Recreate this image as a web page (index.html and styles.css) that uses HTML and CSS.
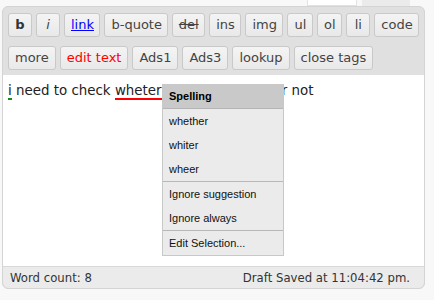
FILE: index.html
```html
<!DOCTYPE html>
<html>
<head>
<meta charset="utf-8">
<link rel="stylesheet" href="styles.css">
</head>
<body>
<div class="page">
  <div class="tabs">
    <div class="tab tab-white"></div>
    <div class="tab tab-grey"></div>
  </div>
  <div class="editor">
    <div class="toolbar">
      <div class="row">
        <button class="btn bold">b</button>
        <button class="btn ital">i</button>
        <button class="btn link">link</button>
        <button class="btn">b-quote</button>
        <button class="btn del">del</button>
        <button class="btn">ins</button>
        <button class="btn">img</button>
        <button class="btn">ul</button>
        <button class="btn">ol</button>
        <button class="btn">li</button>
        <button class="btn">code</button>
      </div>
      <div class="row">
        <button class="btn">more</button>
        <button class="btn red">edit text</button>
        <button class="btn">Ads1</button>
        <button class="btn">Ads3</button>
        <button class="btn">lookup</button>
        <button class="btn">close tags</button>
      </div>
    </div>
    <div class="content">
      <p class="text"><span class="gram">i</span> need to check <span class="spell">wheter</span> or not, whether or not</p>
    </div>
    <div class="footer">
      <span>Word count: 8</span>
      <span>Draft Saved at 11:04:42 pm.</span>
    </div>
    <div class="menu">
      <div class="menu-head">Spelling</div>
      <div class="menu-item">whether</div>
      <div class="menu-item">whiter</div>
      <div class="menu-item">wheer</div>
      <div class="menu-sep"></div>
      <div class="menu-item">Ignore suggestion</div>
      <div class="menu-item">Ignore always</div>
      <div class="menu-sep"></div>
      <div class="menu-item">Edit Selection...</div>
    </div>
  </div>
</div>
</body>
</html>
```
FILE: styles.css
```css
* { box-sizing: border-box; }
html, body { margin: 0; padding: 0; }
body {
  background: #f8f8f8;
  font-family: "DejaVu Sans", Verdana, sans-serif;
  color: #222;
}
.page {
  width: 434px;
  height: 300px;
  padding-left: 2px;
}
.tabs {
  display: flex;
  justify-content: flex-end;
  gap: 5px;
  height: 6px;
  padding-right: 24px;
}
.tab { height: 6px; }
.tab-white {
  width: 50px;
  background: #fff;
  border: 1px solid #e2e2e2;
  border-top: none;
}
.tab-grey {
  width: 48px;
  background: #ebebeb;
}
.editor {
  position: relative;
  width: 423px;
  background: #e0e0e0;
  border: 1px solid #d4d4d4;
  border-radius: 6px;
}
.toolbar {
  display: flex;
  flex-direction: column;
  gap: 9px;
  padding: 6px 5px 5px 5px;
}
.row {
  display: flex;
  gap: 4px;
}
.btn {
  height: 24px;
  min-width: 24px;
  padding: 0 6px;
  font-family: "DejaVu Sans", Verdana, sans-serif;
  font-size: 13px;
  color: #444;
  background: linear-gradient(#f4f4f4, #e9e9e9);
  border: 1px solid #c9c9c9;
  border-radius: 3px;
  line-height: 22px;
  white-space: nowrap;
}
.bold { font-weight: bold; color: #333; }
.ital { font-style: italic; }
.link { color: #0000ff; text-decoration: underline; }
.del { text-decoration: line-through; }
.red { color: #ff0000; }
.content {
  background: #fff;
  height: 191px;
  padding: 8px 5px;
}
.text {
  margin: 0;
  font-size: 13.4px;
  line-height: 16px;
  color: #222;
  white-space: nowrap;
}
.gram { border-bottom: 2px solid #1a8a1a; }
.spell { border-bottom: 2px solid #ff0000; }
.footer {
  display: flex;
  justify-content: space-between;
  align-items: center;
  height: 22px;
  padding: 0 14px 0 7px;
  background: #ebebeb;
  border-top: 1px solid #d8d8d8;
  border-radius: 0 0 6px 6px;
  font-size: 11.7px;
  color: #333;
}
.menu {
  position: absolute;
  left: 159px;
  top: 77px;
  width: 122px;
  background: #ebebeb;
  border: 1px solid #c8c8c8;
  border-top: none;
  font-family: "Liberation Sans", Arial, sans-serif;
  font-size: 11px;
  color: #111;
}
.menu-head {
  height: 25px;
  line-height: 25px;
  padding-left: 6px;
  background: #c9c9c9;
  border-bottom: 1px solid #b5b5b5;
  font-weight: bold;
  font-size: 11px;
  color: #000;
}
.menu-item {
  height: 24px;
  line-height: 24px;
  padding-left: 6px;
}
.menu-sep {
  height: 1px;
  background: #b8b8b8;
}
```
